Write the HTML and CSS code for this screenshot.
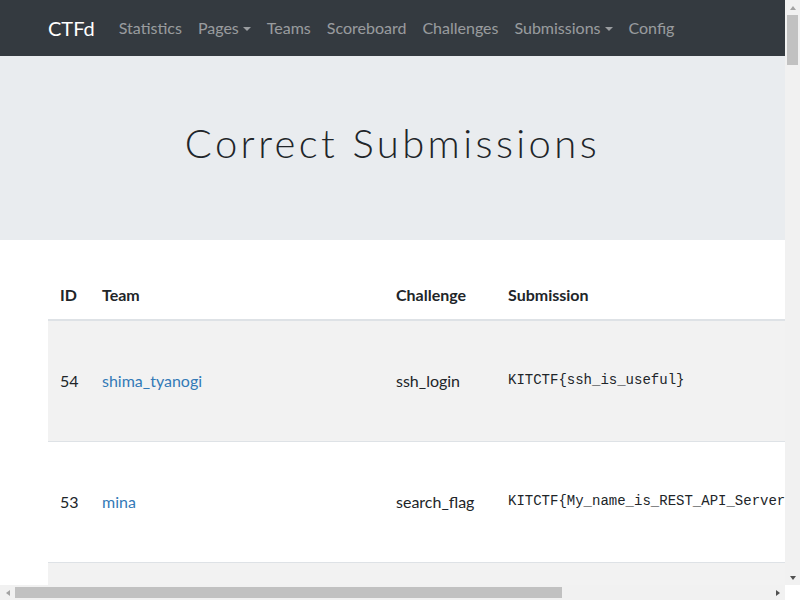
FILE: index.html
```html
<!DOCTYPE html>
<html>
<head>
<meta charset="utf-8">
<title>CTFd</title>
<link rel="stylesheet" href="styles.css">
</head>
<body>
<div class="window">
  <div class="viewport">
    <nav class="navbar">
      <a class="brand" href="#">CTFd</a>
      <ul class="nav-links">
        <li><a href="#">Statistics</a></li>
        <li><a class="dropdown" href="#">Pages</a></li>
        <li><a href="#">Teams</a></li>
        <li><a href="#">Scoreboard</a></li>
        <li><a href="#">Challenges</a></li>
        <li><a class="dropdown" href="#">Submissions</a></li>
        <li><a href="#">Config</a></li>
      </ul>
    </nav>
    <div class="jumbotron">
      <h1>Correct Submissions</h1>
    </div>
    <main class="container">
      <table class="table">
        <thead>
          <tr>
            <th class="c-id">ID</th>
            <th class="c-team">Team</th>
            <th class="c-chal">Challenge</th>
            <th class="c-sub">Submission</th>
          </tr>
        </thead>
        <tbody>
          <tr class="odd">
            <td>54</td>
            <td><a href="#">shima_tyanogi</a></td>
            <td>ssh_login</td>
            <td><code>KITCTF{ssh_is_useful}</code></td>
          </tr>
          <tr>
            <td>53</td>
            <td><a href="#">mina</a></td>
            <td>search_flag</td>
            <td><code>KITCTF{My_name_is_REST_API_Server</code></td>
          </tr>
          <tr class="odd">
            <td></td><td></td><td></td><td></td>
          </tr>
        </tbody>
      </table>
    </main>
  </div>
  <div class="vscroll">
    <span class="arrow up"></span>
    <div class="vtrack"><div class="vthumb"></div></div>
    <span class="arrow down"></span>
  </div>
  <div class="hscroll">
    <span class="arrow left"></span>
    <div class="htrack"><div class="hthumb"></div></div>
    <span class="arrow right"></span>
  </div>
  <div class="corner"></div>
</div>
</body>
</html>
```

FILE: styles.css
```css
html, body {
  margin: 0;
  padding: 0;
  overflow: hidden;
}
body {
  font-family: Lato, "Liberation Sans", sans-serif;
  font-size: 16px;
  line-height: 24px;
  color: #212529;
  background: #fff;
}
a {
  text-decoration: none;
}
.window {
  display: grid;
  grid-template-columns: 785px 15px;
  grid-template-rows: 585px 15px;
  width: 800px;
  height: 600px;
}
.viewport {
  overflow: hidden;
  min-width: 0;
}
.navbar {
  display: flex;
  align-items: center;
  height: 56px;
  padding: 0 48px;
  background: #343a40;
  box-sizing: border-box;
}
.brand {
  color: #fff;
  font-size: 20px;
  line-height: 30px;
  margin-right: 16px;
}
.nav-links {
  display: flex;
  list-style: none;
  margin: 0;
  padding: 0;
}
.nav-links a {
  display: block;
  padding: 8px;
  color: rgba(255, 255, 255, 0.5);
}
.dropdown::after {
  content: "";
  display: inline-block;
  margin-left: 4px;
  vertical-align: 3px;
  border-top: 4.8px solid;
  border-left: 4.8px solid transparent;
  border-right: 4.8px solid transparent;
}
.jumbotron {
  background: #e9ecef;
  height: 184px;
  display: flex;
  align-items: center;
  justify-content: center;
}
.jumbotron h1 {
  margin: 0;
  font-family: Lato, sans-serif;
  font-weight: 300;
  font-size: 40px;
  letter-spacing: 3.4px;
  line-height: 48px;
  color: #212529;
  position: relative;
  top: -5px;
}
.container {
  padding: 31px 0 0 48px;
}
.table {
  border-collapse: collapse;
  table-layout: fixed;
  width: 1036px;
}
.c-id { width: 18px; }
.c-team { width: 270px; }
.c-chal { width: 88px; }
.c-sub { width: 564px; }
.table th {
  text-align: left;
  font-weight: 700;
  padding: 12px;
  border-bottom: 2px solid #dee2e6;
  vertical-align: bottom;
}
.table td {
  padding: 12px;
  height: 96px;
  border-bottom: 1px solid #dee2e6;
  vertical-align: middle;
  white-space: nowrap;
}
.table tr.odd td {
  background: #f2f2f2;
}
.table td a {
  color: #337ab7;
}
code {
  font-family: "Liberation Mono", monospace;
  font-size: 14px;
  position: relative;
  top: -2px;
}
.vscroll {
  display: flex;
  flex-direction: column;
  background: #f1f1f1;
}
.hscroll {
  display: flex;
  background: #f1f1f1;
}
.corner {
  background: #fff;
}
.arrow {
  width: 15px;
  height: 15px;
  flex: none;
  display: flex;
  align-items: center;
  justify-content: center;
}
.arrow::before {
  content: "";
  width: 0;
  height: 0;
}
.arrow.up::before {
  border-left: 3.5px solid transparent;
  border-right: 3.5px solid transparent;
  border-bottom: 4px solid #a3a3a3;
}
.arrow.down::before {
  border-left: 3.5px solid transparent;
  border-right: 3.5px solid transparent;
  border-top: 4px solid #505050;
}
.arrow.left::before {
  border-top: 3.5px solid transparent;
  border-bottom: 3.5px solid transparent;
  border-right: 4px solid #a3a3a3;
}
.arrow.right::before {
  border-top: 3.5px solid transparent;
  border-bottom: 3.5px solid transparent;
  border-left: 4px solid #505050;
}
.vtrack {
  flex: 1;
  padding: 0 2px;
}
.vthumb {
  height: 50px;
  background: #c1c1c1;
}
.htrack {
  flex: 1;
  padding: 2px 0;
}
.hthumb {
  width: 547px;
  height: 11px;
  background: #c1c1c1;
}
```
